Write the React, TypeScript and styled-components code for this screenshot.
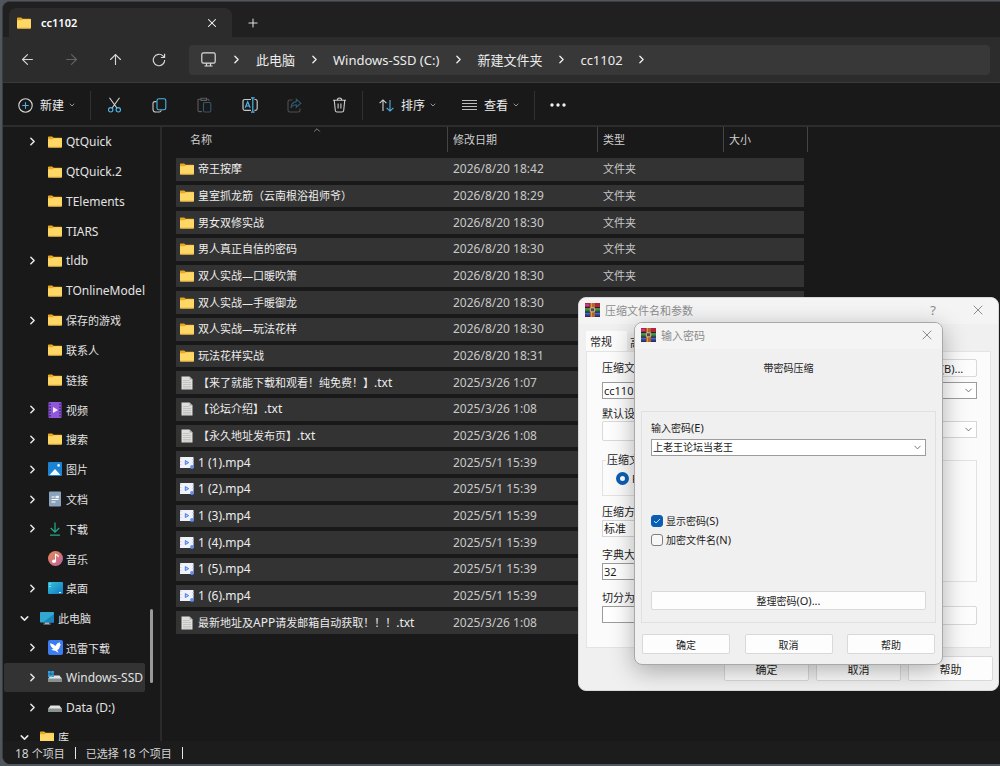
import React from "react";
import styled, { createGlobalStyle, css } from "styled-components";
import { ArrowLeft, ArrowRight, ArrowUp, ChevronDown, ChevronRight, ChevronUp, Plus, X } from "lucide-react";

const Global = createGlobalStyle`
  * { box-sizing: border-box; }
  body {
    margin: 0;
    background: #50565e;
    font-family: "Noto Sans", "Noto Sans CJK SC", sans-serif;
    font-size: 11px;
    color: #dedede;
  }
  button, input, select { font: inherit; color: inherit; margin: 0; }
  button { border: 0; background: none; padding: 0; }
  svg { display: block; flex: none; }
`;

/* ---------- text ---------- */

const Latin = styled.span`
  font-size: 12px;
`;

const DialogLatin = styled.span`
  font-size: 11px;
`;

function Mixed({ text, small }: { text: string; small?: boolean }) {
  const Part = small ? DialogLatin : Latin;
  return (
    <span>
      {text.split(/([\x20-\x7e]+)/).filter(Boolean).map((part, i) =>
        /^[\x20-\x7e]/.test(part) ? <Part key={i}>{part}</Part> : part
      )}
    </span>
  );
}

/* ---------- icons ---------- */

const FolderIcon = () => (
  <svg width="14" height="12" viewBox="0 0 14 12">
    <path d="M0 1.2Q0 .4.8.4h3.4l1.4 1.4h7.6q.8 0 .8.8V6H0z" fill="#e9a820" />
    <path d="M0 3.2h4.6l1.2-.9h8.2v8.4q0 .7-.7.7H.7q-.7 0-.7-.7z" fill="#ffd766" />
    <path d="M0 10.4h14q0 1-.7 1H.7q-.7 0-.7-1z" fill="#eebb45" />
  </svg>
);

const TextFileIcon = () => (
  <svg width="14" height="14" viewBox="0 0 14 14">
    <path d="M1.500.5h8l3 3v10h-11z" fill="#dededc" />
    <path d="M9.500.5v3h3z" fill="#a9a9a9" />
    <path d="M3 4.500h6.500M3 6.500h8M3 8.500h8M3 10.500h8M3 12h8" stroke="#bcbcba" strokeWidth=".8" />
  </svg>
);

const VideoFileIcon = () => (
  <svg width="14" height="12" viewBox="0 0 14 12">
    <rect x="0" y="0" width="13.500" height="11" rx=".6" fill="#f0f2fb" />
    <path d="M0 1h1.400v1H0zM0 4h1.400v1H0zM0 7h1.400v1H0zM12 2h1.500v1H12zM12 5h1.500v1H12z" fill="#c9d0ea" />
    <path d="M5.300 3.600v4l3.400-2z" fill="#b9ceff" stroke="#4a7be8" strokeWidth="1" />
    <circle cx="12" cy="10" r="1.900" fill="#5c8df0" />
  </svg>
);

const FilmIcon = () => (
  <svg width="14" height="16" viewBox="0 0 14 16">
    <rect x=".5" y="0" width="13" height="16" rx="1" fill="#9157db" />
    <path d="M2 1.500v13M12 1.500v13" stroke="#3f2378" strokeWidth="1.400" strokeDasharray="1.6 1.3" />
    <path d="M5 5v6l5-3z" fill="#f3eaff" />
  </svg>
);

const PictureIcon = () => (
  <svg width="14" height="14" viewBox="0 0 14 14">
    <rect width="14" height="14" rx="1" fill="#1c82d4" />
    <path d="M1.500 13l5.500-6 5.500 6z" fill="#f2faff" />
    <circle cx="10.600" cy="3.400" r="1.300" fill="#e9f6ff" />
  </svg>
);

const DocumentIcon = () => (
  <svg width="14" height="16" viewBox="0 0 14 16">
    <rect x="1" y=".5" width="12" height="15" rx="1" fill="#8aa2ba" />
    <path d="M3.500 6h3M3.500 8.500h7M3.500 11h4" stroke="#fff" strokeWidth="1.100" />
    <rect x="7.500" y="4.800" width="3.400" height="2.400" fill="#e9f1f8" />
  </svg>
);

const DownloadIcon = () => (
  <svg width="14" height="14" viewBox="0 0 14 14" fill="none" stroke="#27a587" strokeWidth="1.300">
    <path d="M7 .5v9.500M2.800 6L7 10.200 11.200 6M2 13.200h10" />
  </svg>
);

const MusicIcon = () => (
  <svg width="15" height="15" viewBox="0 0 15 15">
    <defs>
      <linearGradient id="music" x1="0" y1="0" x2="1" y2="1">
        <stop offset="0" stopColor="#ee8a50" />
        <stop offset="1" stopColor="#b9609f" />
      </linearGradient>
    </defs>
    <circle cx="7.500" cy="7.500" r="7.500" fill="url(#music)" />
    <ellipse cx="6" cy="10.300" rx="2" ry="1.700" fill="#fff" />
    <path d="M7.500 10.200V3.400l2.600 1.200v1.600" fill="none" stroke="#fff" strokeWidth="1.100" />
  </svg>
);

const DesktopIcon = () => (
  <svg width="15" height="12" viewBox="0 0 15 12">
    <defs>
      <linearGradient id="desk" x1="0" y1="0" x2="1" y2="1">
        <stop offset="0" stopColor="#32c5d8" />
        <stop offset="1" stopColor="#1576c4" />
      </linearGradient>
    </defs>
    <rect width="15" height="12" rx="1" fill="url(#desk)" />
    <path d="M1.500 2h1.200M1.500 4.500h1.200M11 10.500h2" stroke="#d9f7ff" strokeWidth="1" />
  </svg>
);

const ComputerIcon = () => (
  <svg width="14" height="13" viewBox="0 0 14 13">
    <rect width="14" height="10.500" rx=".8" fill="#31a8cf" />
    <path d="M14 2v8.500H3z" fill="#1e84bd" />
    <path d="M5 10.500h4v1H5zM3.500 11.500h7v1h-7z" fill="#9fb4c1" />
  </svg>
);

const ThunderIcon = () => (
  <svg width="15" height="15" viewBox="0 0 15 15">
    <rect width="15" height="15" rx="2" fill="#3c7df2" />
    <path d="M2 3.200c2.300.4 4 1.300 5.400 2.800 1.300-2.400 2.600-3.500 4.800-3.800-.5.7-.5 1.200-.2 1.900l1.300.8-1.300.5c-.1 2.300-1.200 3.900-2.900 4.600L10.700 13 7.300 10.800c-1.800.1-3.300-.6-4.100-1.700 1 .1 1.600 0 2.200-.3C3.500 7.600 2.300 5.700 2 3.200z" fill="#fff" />
  </svg>
);

const DriveIcon = ({ system }: { system?: boolean }) => (
  <svg width="14" height="13" viewBox="0 0 14 13">
    <path d="M2.500 4.500h9L14 8H0z" fill="#e3e3e3" />
    <rect y="7.500" width="14" height="3.500" rx=".6" fill="#8c8f91" />
    <circle cx="2.500" cy="9.300" r=".8" fill="#41c34a" />
    {system && <path d="M0 0h2.700v2.700H0zM3.200 0h2.700v2.700H3.200zM0 3.200h2.700v2.700H0zM3.200 3.200h2.700v2.700H3.200z" fill="#28a4e8" />}
  </svg>
);

const MonitorIcon = () => (
  <svg width="15" height="15" viewBox="0 0 15 15" fill="none" stroke="#dcdcdc" strokeWidth="1.200">
    <rect x=".8" y=".8" width="13.400" height="10.400" rx="1.600" />
    <path d="M5.500 11.200v2.600M9.500 11.200v2.600M3.500 14h8" />
  </svg>
);

const RefreshIcon = () => (
  <svg width="14" height="14" viewBox="0 0 13 13" fill="none" stroke="#d6d6d6" strokeWidth="1.100">
    <path d="M11.800 6.500A5.300 5.300 0 1 1 10.200 2.700L11.500 4M11.700.8V4.200H8.300" />
  </svg>
);

const blue = "#4cb5e8";

const NewIcon = () => (
  <svg width="15" height="15" viewBox="0 0 15 15" fill="none" strokeWidth="1.100">
    <circle cx="7.500" cy="7.500" r="6.700" stroke="#d8d8d8" />
    <path d="M7.500 4.300v6.400M4.300 7.500h6.400" stroke={blue} />
  </svg>
);

const CutIcon = () => (
  <svg width="15" height="16" viewBox="0 0 15 16" fill="none" strokeWidth="1.100">
    <path d="M2.500.8L9.900 11M12.500.8L5.100 11" stroke="#d8d8d8" />
    <circle cx="3.700" cy="12.800" r="2.200" stroke={blue} />
    <circle cx="11.300" cy="12.800" r="2.200" stroke={blue} />
  </svg>
);

const CopyIcon = () => (
  <svg width="15" height="15" viewBox="0 0 15 15" fill="none" strokeWidth="1.100">
    <path d="M4.500 3.600H3Q1 3.600 1 5.600v5.600q0 2.800 2.800 2.800h3.400q1.800 0 2-1.700" stroke="#c6c6c6" />
    <rect x="5" y=".8" width="8.800" height="11" rx="1.800" stroke={blue} />
  </svg>
);

const PasteIcon = () => (
  <svg width="15" height="16" viewBox="0 0 15 16" fill="none" strokeWidth="1.100">
    <path d="M4 2.200H2.200q-1.200 0-1.200 1.200v10q0 1.200 1.200 1.200H5M9.500 2.200h1.300q1.200 0 1.200 1.200V4M4 1.200h5.500v2.200H4z" stroke="#5a5a5a" />
    <rect x="6.500" y="5.500" width="7.300" height="9.500" rx="1.200" stroke="#2d5a70" />
  </svg>
);

const RenameIcon = () => (
  <svg width="16" height="16" viewBox="0 0 16 16" fill="none" strokeWidth="1.200">
    <path d="M9 2.500H2.800Q1 2.500 1 4.300v7.200q0 1.800 1.800 1.800H9M12.500 2.500h.9q1.800 0 1.800 1.800v7.200q0 1.800-1.800 1.800h-.9" stroke="#c6c6c6" />
    <path d="M10.800 1v14M9 .8h3.600M9 15.200h3.600M3.200 10.800L5.700 4.800l2.500 6M4 9h3.400" stroke={blue} />
  </svg>
);

const ShareIcon = () => (
  <svg width="15" height="15" viewBox="0 0 15 15" fill="none" strokeWidth="1.100">
    <path d="M5.500 2H2.800Q1 2 1 3.800v8.400Q1 14 2.800 14h8.400q1.800 0 1.800-1.800v-1.700" stroke="#4f4f4f" />
    <path d="M9.300 1.200l4.500 4-4.500 4V6.800Q5.500 6.800 4 10q0-5.500 5.300-6.400z" stroke="#2d5a70" />
  </svg>
);

const TrashIcon = () => (
  <svg width="15" height="16" viewBox="0 0 15 16" fill="none" stroke="#d0d0d0" strokeWidth="1.100">
    <path d="M1 3.300h13M5.300 3.200Q5.300 1 7.500 1t2.200 2.200M2.300 3.500l1 10q.2 1.500 1.700 1.500h5q1.500 0 1.700-1.500l1-10M6.100 6.500v5M8.900 6.500v5" />
  </svg>
);

const SortIcon = () => (
  <svg width="15" height="13" viewBox="0 0 15 13" fill="none" strokeWidth="1.100">
    <path d="M4 12V1M.6 4.200L4 .9l3.400 3.300" stroke="#d0d0d0" />
    <path d="M11 1v11M7.600 8.800l3.400 3.300 3.400-3.300" stroke={blue} />
  </svg>
);

const LinesIcon = () => (
  <svg width="15" height="12" viewBox="0 0 15 12" stroke="#bdbdbd">
    <path d="M0 1.500h15M0 4.500h15M0 7.500h15M0 10.500h15" />
  </svg>
);

const DotsIcon = () => (
  <svg width="16" height="4" viewBox="0 0 16 4" fill="#f0f0f0">
    <circle cx="2" cy="2" r="1.700" />
    <circle cx="8" cy="2" r="1.700" />
    <circle cx="14" cy="2" r="1.700" />
  </svg>
);

const ArchiveIcon = () => (
  <svg width="15" height="14" viewBox="0 0 15 14">
    <rect width="15" height="4.500" fill="#b0243f" />
    <rect y="1" width="4" height="2" fill="#c33a8c" />
    <rect y="4.700" width="15" height="4.300" fill="#2f7a3b" />
    <rect y="5.500" width="15" height="1" fill="#5ba851" />
    <rect y="9.200" width="15" height="4.500" fill="#2b3f94" />
    <rect y="10.200" width="15" height="1" fill="#5a76cc" />
    <path d="M0 4.500h15M0 9.100h15M0 13.700h15" stroke="#1f1428" strokeWidth=".9" />
    <rect x="5" width="5" height="14" fill="#b5642a" />
    <path d="M6.500 0v14" stroke="#e0a04a" strokeWidth=".9" />
    <rect x="5.300" y="4.800" width="4.400" height="4" rx=".6" fill="#54484a" stroke="#d9c8a0" strokeWidth=".9" />
  </svg>
);

/* ---------- explorer window ---------- */

const Screen = styled.div`
  position: relative;
  height: 100vh;
  min-height: 766px;
  padding: 1px 0 2px 2px;
  overflow: hidden;
`;

const Explorer = styled.main`
  display: flex;
  flex-direction: column;
  height: 100%;
  border: solid #3c3c3c;
  border-width: 1px 0 0 1px;
  border-radius: 8px 0 0 8px;
  background: #191919;
  overflow: hidden;
`;

const TitleBar = styled.header`
  display: flex;
  align-items: flex-end;
  height: 35px;
  padding-left: 6px;
  background: #202020;
`;

const Tab = styled.div`
  display: flex;
  align-items: center;
  width: 223px;
  height: 29px;
  padding: 0 13px 0 8px;
  gap: 10px;
  border-radius: 7px 7px 0 0;
  background: #2c2c2c;
  font-size: 11px;
  font-weight: 600;
  color: #fff;
`;

const TabLabel = styled.span`
  flex: 1;
`;

const NewTab = styled.button`
  display: flex;
  align-items: center;
  justify-content: center;
  width: 42px;
  height: 29px;
`;

const NavBar = styled.div`
  display: flex;
  align-items: center;
  height: 46px;
  padding: 0 10px 0 2px;
  background: #2c2c2c;
  border-bottom: 1px solid #3a3a3a;
`;

const NavButton = styled.button`
  display: flex;
  align-items: center;
  justify-content: center;
  width: 44px;
  height: 30px;
  color: #d6d6d6;
  &:disabled { color: #636363; }
`;

const Address = styled.nav`
  flex: 1;
  display: flex;
  align-items: center;
  height: 30px;
  margin-left: 8px;
  padding-left: 12px;
  border-radius: 4px;
  background: #383838;
`;

const Crumb = styled.button`
  font-size: 13px;
  line-height: 18px;
  color: #ececec;
  white-space: nowrap;
`;

const CrumbArrow = styled.span<{ $first?: boolean }>`
  display: flex;
  justify-content: center;
  width: ${(p) => (p.$first ? 40 : 38)}px;
  color: #f0f0f0;
`;

const Toolbar = styled.div`
  display: flex;
  align-items: center;
  height: 44px;
  padding: 2px 0 0 15px;
  border-bottom: 2px solid #2d2d2d;
`;

const ToolButton = styled.button<{ $end: number }>`
  display: flex;
  align-items: center;
  height: 30px;
  margin-right: ${(p) => p.$end}px;
  gap: 7px;
  font-size: 12px;
  color: #ececec;
  white-space: nowrap;
`;

const ToolLabel = styled.span`
  display: flex;
  align-items: center;
  gap: 4px;
  svg { color: #a8a8a8; }
`;

const IconButton = styled.button`
  display: flex;
  align-items: center;
  justify-content: center;
  width: 45px;
  height: 30px;
`;

const ToolDivider = styled.span<{ $after?: number }>`
  width: 1px;
  height: 29px;
  margin-right: ${(p) => p.$after ?? 0}px;
  background: #303030;
`;

const Content = styled.div`
  flex: 1;
  min-height: 0;
  display: flex;
`;

const Sidebar = styled.aside`
  position: relative;
  flex: none;
  width: 159px;
  border-right: 2px solid #2a2a2a;
  overflow: hidden;
`;

const Tree = styled.ul`
  display: grid;
  grid-template-rows: repeat(21, 1fr);
  height: 625px;
  margin: 0;
  padding: 0 17px 0 1px;
  list-style: none;
`;

const TreeRow = styled.button<{ $root?: boolean; $active?: boolean }>`
  display: flex;
  align-items: center;
  width: 100%;
  height: 100%;
  padding-left: ${(p) => (p.$root ? 14 : 22)}px;
  overflow: hidden;
  white-space: nowrap;
  border-radius: 2px;
  color: #e2e2e2;
  background: ${(p) => (p.$active ? "#333" : "none")};
`;

const TreeArrow = styled.span`
  display: flex;
  flex: none;
  width: 22px;
  color: #e8e8e8;
`;

const IconSlot = styled.span`
  display: flex;
  justify-content: center;
  flex: none;
  width: 14px;
  margin-right: 4px;
`;

const ScrollThumb = styled.div`
  position: absolute;
  right: 7px;
  bottom: 58px;
  width: 3px;
  height: 74px;
  border-radius: 2px;
  background: #9a9a9a;
`;

const Pane = styled.section`
  flex: 1;
  padding-left: 14px;
`;

const columns = css`
  display: grid;
  grid-template-columns: 272px 150px 126px 1fr;
`;

const FileTable = styled.table`
  display: block;
  width: 632px;
  line-height: 20px;
`;

const FileHead = styled.thead`
  display: block;
  padding-bottom: 4px;
`;

const HeadRow = styled.tr`
  ${columns}
`;

const HeadCell = styled.th<{ $first?: boolean }>`
  position: relative;
  height: 25px;
  padding: 0 0 0 ${(p) => (p.$first ? 14 : 5)}px;
  border-right: 1px solid #454545;
  line-height: 25px;
  font-weight: 400;
  text-align: left;
  color: #cfcfcf;
`;

const SortMark = styled.span`
  position: absolute;
  top: -2px;
  left: 50%;
  color: #9a9a9a;
`;

const FileBody = styled.tbody`
  display: grid;
  grid-template-rows: repeat(18, 1fr);
  height: 480px;
  margin-right: 4px;
`;

const FileRow = styled.tr`
  ${columns}
  align-items: center;
  border: solid transparent;
  border-width: 2px 0;
  background: #333;
  background-clip: padding-box;
`;

const NameCell = styled.td`
  display: flex;
  align-items: center;
  padding: 0 0 0 4px;
  white-space: nowrap;
  color: #ececec;
`;

const Cell = styled.td`
  padding: 0 0 0 5px;
  white-space: nowrap;
  color: #c8c8c8;
`;

const StatusBar = styled.footer`
  display: flex;
  align-items: center;
  height: 23px;
  padding: 1px 0 0 12px;
  gap: 10px;
  background: #1c1c1c;
  color: #d4d4d4;
`;

const StatusDivider = styled.span`
  width: 1px;
  height: 12px;
  background: #e6e6e6;
`;

/* ---------- dialogs ---------- */

const Dialog = styled.section`
  position: absolute;
  display: flex;
  flex-direction: column;
  border-radius: 8px;
  background: #f0f0f0;
  color: #1c1c1c;
  overflow: hidden;
`;

const ArchiveDialog = styled(Dialog)`
  top: 297px;
  right: 1px;
  width: 421px;
  height: 394px;
  border: 1px solid #d8d8d8;
  font-size: 11px;
`;

const PasswordDialog = styled(Dialog)`
  top: 322px;
  right: 57px;
  width: 309px;
  height: 343px;
  border: 1px solid #a8a8a8;
  box-shadow: 0 6px 24px rgba(0, 0, 0, 0.3);
  font-size: 10px;
`;

const DialogTitle = styled.header`
  display: flex;
  align-items: center;
  height: 26px;
  padding: 0 0 2px 6px;
  gap: 5px;
  background: #f4f4f4;
  color: #8c8c8c;
`;

const DialogHeading = styled.h2`
  flex: 1;
  margin: 0;
  font-size: 11px;
  font-weight: 400;
`;

const TitleButton = styled.button<{ $width: number }>`
  display: flex;
  align-items: center;
  justify-content: center;
  width: ${(p) => p.$width}px;
  height: 24px;
  font-size: 13px;
`;

const TabStrip = styled.div`
  display: flex;
  align-items: flex-end;
  padding: 7px 7px 0;
`;

const DialogTab = styled.button<{ $active?: boolean }>`
  height: ${(p) => (p.$active ? 20 : 18)}px;
  padding: 0 ${(p) => (p.$active ? 15 : 3)}px 0 ${(p) => (p.$active ? 4 : 3)}px;
  background: ${(p) => (p.$active ? "#fbfbfb" : "#ececec")};
`;

const TabPage = styled.div`
  display: flex;
  flex-direction: column;
  height: 297px;
  margin: 0 7px;
  padding: 7px 13px 0 15px;
  border: 1px solid #e4e4e4;
  background: #fbfbfb;
`;

const Between = styled.div`
  display: flex;
  align-items: center;
  justify-content: space-between;
  margin-bottom: 5px;
`;

const Columns = styled.div`
  display: grid;
  grid-template-columns: 160px 1fr;
  gap: 12px;
`;

const Stack = styled.div<{ $top?: number }>`
  display: flex;
  flex-direction: column;
  padding-top: ${(p) => p.$top ?? 0}px;
`;

const Field = styled.div<{ $top: number }>`
  display: flex;
  flex-direction: column;
  gap: 1px;
  margin-top: ${(p) => p.$top}px;
`;

const FieldLabel = styled.label`
  line-height: 14px;
  white-space: nowrap;
`;

const SelectBox = styled.span`
  position: relative;
  display: block;
`;

const Picker = styled.select<{ $soft?: boolean }>`
  appearance: none;
  display: block;
  width: 100%;
  height: 17px;
  padding: 0 20px 0 1px;
  border: 1px solid ${(p) => (p.$soft ? "#d6d6d6" : "#9c9c9c")};
  border-radius: 0;
  background: #fff;
  line-height: 15px;
`;

const PickerArrow = styled.span`
  position: absolute;
  top: 3px;
  right: 3px;
  color: #6b6b6b;
  pointer-events: none;
`;

const PushButton = styled.button<{ $width?: number; $height: number }>`
  width: ${(p) => (p.$width ? `${p.$width}px` : "100%")};
  height: ${(p) => p.$height}px;
  border: 1px solid #d9d9d9;
  border-radius: 2px;
  background: #fdfdfd;
  white-space: nowrap;
`;

const Group = styled.fieldset<{ $height: number }>`
  height: ${(p) => p.$height}px;
  min-width: 0;
  margin: 0;
  padding: 4px 13px;
  border: 1px solid #e2e2e2;
`;

const Legend = styled.legend`
  margin-left: -10px;
  padding: 0 1px;
  line-height: 14px;
`;

const Option = styled.label`
  display: flex;
  align-items: center;
  gap: 3px;
  white-space: nowrap;
`;

const Radio = styled.input`
  appearance: none;
  width: 13px;
  height: 13px;
  border: 4px solid #0a5fb4;
  border-radius: 50%;
  background: #fff;
`;

const Tick = styled.input`
  appearance: none;
  width: 12px;
  height: 12px;
  border: 1px solid #7e7e7e;
  border-radius: 3px;
  background: #f7f7f7;
  &:checked {
    border-color: #0a5fb4;
    background: #0a5fb4;
  }
`;

const TickBox = styled.span`
  position: relative;
  display: flex;
`;

const TickMark = styled.span`
  position: absolute;
  top: 3px;
  left: 2px;
  pointer-events: none;
`;

const ArchiveFooter = styled.footer`
  display: flex;
  justify-content: flex-end;
  gap: 7px;
  padding: 8px 5px 0;
`;

const Caption = styled.p`
  margin: 11px 0 35px;
  line-height: 16px;
  text-align: center;
`;

const PasswordPanel = styled.div`
  display: flex;
  flex-direction: column;
  height: 212px;
  margin: 0 6px;
  padding: 9px 9px 0 9px;
  border: 1px solid #e0e0e0;
`;

const Ticks = styled.div`
  display: flex;
  flex-direction: column;
  gap: 5px;
  margin: 58px 0 44px;
  line-height: 14px;
`;

const PasswordFooter = styled.footer`
  display: flex;
  justify-content: space-between;
  padding: 11px 7px 0;
`;

/* ---------- data ---------- */

type Node = { label: string; icon: React.ReactNode; arrow?: "right" | "down"; root?: boolean; active?: boolean };

const tree: Node[] = [
  { label: "QtQuick", icon: <FolderIcon />, arrow: "right" },
  { label: "QtQuick.2", icon: <FolderIcon /> },
  { label: "TElements", icon: <FolderIcon /> },
  { label: "TIARS", icon: <FolderIcon /> },
  { label: "tldb", icon: <FolderIcon />, arrow: "right" },
  { label: "TOnlineModel", icon: <FolderIcon /> },
  { label: "保存的游戏", icon: <FolderIcon />, arrow: "right" },
  { label: "联系人", icon: <FolderIcon /> },
  { label: "链接", icon: <FolderIcon /> },
  { label: "视频", icon: <FilmIcon />, arrow: "right" },
  { label: "搜索", icon: <FolderIcon />, arrow: "right" },
  { label: "图片", icon: <PictureIcon />, arrow: "right" },
  { label: "文档", icon: <DocumentIcon />, arrow: "right" },
  { label: "下载", icon: <DownloadIcon />, arrow: "right" },
  { label: "音乐", icon: <MusicIcon /> },
  { label: "桌面", icon: <DesktopIcon />, arrow: "right" },
  { label: "此电脑", icon: <ComputerIcon />, arrow: "down", root: true },
  { label: "迅雷下载", icon: <ThunderIcon />, arrow: "right" },
  { label: "Windows-SSD", icon: <DriveIcon system />, arrow: "right", active: true },
  { label: "Data (D:)", icon: <DriveIcon />, arrow: "right" },
  { label: "库", icon: <FolderIcon />, arrow: "down", root: true },
];

type Kind = "folder" | "text" | "video";

const files: [string, string, Kind][] = [
  ["帝王按摩", "2026/8/20 18:42", "folder"],
  ["皇室抓龙筋（云南根浴祖师爷）", "2026/8/20 18:29", "folder"],
  ["男女双修实战", "2026/8/20 18:30", "folder"],
  ["男人真正自信的密码", "2026/8/20 18:30", "folder"],
  ["双人实战—口暖吹箫", "2026/8/20 18:30", "folder"],
  ["双人实战—手暖御龙", "2026/8/20 18:30", "folder"],
  ["双人实战—玩法花样", "2026/8/20 18:30", "folder"],
  ["玩法花样实战", "2026/8/20 18:31", "folder"],
  ["【来了就能下载和观看！纯免费！】.txt", "2025/3/26 1:07", "text"],
  ["【论坛介绍】.txt", "2025/3/26 1:08", "text"],
  ["【永久地址发布页】.txt", "2025/3/26 1:08", "text"],
  ["1 (1).mp4", "2025/5/1 15:39", "video"],
  ["1 (2).mp4", "2025/5/1 15:39", "video"],
  ["1 (3).mp4", "2025/5/1 15:39", "video"],
  ["1 (4).mp4", "2025/5/1 15:39", "video"],
  ["1 (5).mp4", "2025/5/1 15:39", "video"],
  ["1 (6).mp4", "2025/5/1 15:39", "video"],
  ["最新地址及APP请发邮箱自动获取！！！.txt", "2025/3/26 1:08", "text"],
];

const fileIcons: Record<Kind, React.ReactNode> = {
  folder: <FolderIcon />,
  text: <TextFileIcon />,
  video: <VideoFileIcon />,
};

const fileTypes: Record<Kind, string> = { folder: "文件夹", text: "", video: "" };

/* rows from this one on have their type column under the dialog */
const coveredFrom = 5;

const crumbs = ["此电脑", "Windows-SSD (C:)", "新建文件夹", "cc1102"];

/* ---------- parts ---------- */

function Select({ id, value, soft, label }: { id?: string; value?: string; soft?: boolean; label?: string }) {
  return (
    <SelectBox>
      <Picker id={id} $soft={soft} aria-label={label}>
        <option>{value}</option>
      </Picker>
      <PickerArrow>
        <ChevronDown size={11} strokeWidth={2} />
      </PickerArrow>
    </SelectBox>
  );
}

function ArchiveWindow() {
  return (
    <ArchiveDialog role="dialog" aria-labelledby="archive-title">
      <DialogTitle>
        <ArchiveIcon />
        <DialogHeading id="archive-title">压缩文件名和参数</DialogHeading>
        <TitleButton $width={38} aria-label="帮助主题">?</TitleButton>
        <TitleButton $width={41} aria-label="关闭">
          <X size={16} strokeWidth={1.5} />
        </TitleButton>
      </DialogTitle>
      <TabStrip>
        <DialogTab $active>常规</DialogTab>
        <DialogTab>高级</DialogTab>
      </TabStrip>
      <TabPage>
        <Between>
          <FieldLabel htmlFor="archive-name">压缩文件名</FieldLabel>
          <PushButton $width={72} $height={18}>
            <Mixed small text="浏览(B)..." />
          </PushButton>
        </Between>
        <Select id="archive-name" value="cc1102.rar" />
        <Columns>
          <Stack $top={8}>
            <FieldLabel as="span">默认设置</FieldLabel>
            <PushButton $height={20} aria-label="配置" />
          </Stack>
          <Stack $top={22}>
            <Select soft label="更新方式" />
          </Stack>
        </Columns>
        <Columns>
          <Stack $top={12}>
            <Group $height={43}>
              <Legend>压缩文件格式</Legend>
              <Option>
                <Radio type="radio" name="format" defaultChecked />
                RAR
              </Option>
            </Group>
            <Field $top={9}>
              <FieldLabel htmlFor="method">压缩方式</FieldLabel>
              <Select id="method" value="标准" soft />
            </Field>
            <Field $top={11}>
              <FieldLabel htmlFor="dictionary">字典大小</FieldLabel>
              <Select id="dictionary" value="32" />
            </Field>
            <Field $top={11}>
              <FieldLabel htmlFor="volumes">切分为分卷</FieldLabel>
              <Select id="volumes" />
            </Field>
          </Stack>
          <Stack $top={19}>
            <Group $height={122} />
            <Field $top={24}>
              <PushButton $height={19} aria-label="设置密码" />
            </Field>
          </Stack>
        </Columns>
      </TabPage>
      <ArchiveFooter>
        <PushButton $width={85} $height={25}>确定</PushButton>
        <PushButton $width={85} $height={25}>取消</PushButton>
        <PushButton $width={85} $height={25}>帮助</PushButton>
      </ArchiveFooter>
    </ArchiveDialog>
  );
}

function PasswordWindow() {
  return (
    <PasswordDialog role="dialog" aria-labelledby="password-title">
      <DialogTitle>
        <ArchiveIcon />
        <DialogHeading id="password-title">输入密码</DialogHeading>
        <TitleButton $width={30} aria-label="关闭">
          <X size={16} strokeWidth={1.5} />
        </TitleButton>
      </DialogTitle>
      <Caption>带密码压缩</Caption>
      <PasswordPanel>
        <FieldLabel htmlFor="password">
          <Mixed small text="输入密码(E)" />
        </FieldLabel>
        <Field $top={4}>
          <Select id="password" value="上老王论坛当老王" />
        </Field>
        <Ticks>
          <Option>
            <TickBox>
              <Tick type="checkbox" defaultChecked />
              <TickMark>
                <svg width="8" height="6" viewBox="0 0 8 6" fill="none" stroke="#bfe0ff">
                  <path d="M1 3l2 2 4-4" />
                </svg>
              </TickMark>
            </TickBox>
            <Mixed small text="显示密码(S)" />
          </Option>
          <Option>
            <Tick type="checkbox" />
            <Mixed small text="加密文件名(N)" />
          </Option>
        </Ticks>
        <PushButton $height={19}>
          <Mixed small text="整理密码(O)..." />
        </PushButton>
      </PasswordPanel>
      <PasswordFooter>
        <PushButton $width={88} $height={20}>确定</PushButton>
        <PushButton $width={88} $height={20}>取消</PushButton>
        <PushButton $width={88} $height={20}>帮助</PushButton>
      </PasswordFooter>
    </PasswordDialog>
  );
}

export default function App() {
  return (
    <Screen>
      <Global />
      <Explorer>
        <TitleBar>
          <Tab>
            <FolderIcon />
            <TabLabel>cc1102</TabLabel>
            <button aria-label="关闭标签页">
              <X size={14} strokeWidth={1.8} />
            </button>
          </Tab>
          <NewTab aria-label="新标签页">
            <Plus size={14} strokeWidth={1.8} />
          </NewTab>
        </TitleBar>
        <NavBar>
          <NavButton aria-label="后退">
            <ArrowLeft size={17} strokeWidth={1.6} />
          </NavButton>
          <NavButton aria-label="前进" disabled>
            <ArrowRight size={17} strokeWidth={1.6} />
          </NavButton>
          <NavButton aria-label="向上">
            <ArrowUp size={17} strokeWidth={1.6} />
          </NavButton>
          <NavButton aria-label="刷新">
            <RefreshIcon />
          </NavButton>
          <Address aria-label="地址">
            <MonitorIcon />
            <CrumbArrow $first>
              <ChevronRight size={13} strokeWidth={2.4} />
            </CrumbArrow>
            {crumbs.map((name) => (
              <React.Fragment key={name}>
                <Crumb>{name}</Crumb>
                <CrumbArrow>
                  <ChevronRight size={13} strokeWidth={2.4} />
                </CrumbArrow>
              </React.Fragment>
            ))}
          </Address>
        </NavBar>
        <Toolbar>
          <ToolButton $end={14}>
            <NewIcon />
            <ToolLabel>
              新建
              <ChevronDown size={8} strokeWidth={2.6} />
            </ToolLabel>
          </ToolButton>
          <ToolDivider $after={1} />
          <IconButton aria-label="剪切"><CutIcon /></IconButton>
          <IconButton aria-label="复制"><CopyIcon /></IconButton>
          <IconButton aria-label="粘贴" disabled><PasteIcon /></IconButton>
          <IconButton aria-label="重命名"><RenameIcon /></IconButton>
          <IconButton aria-label="共享" disabled><ShareIcon /></IconButton>
          <IconButton aria-label="删除"><TrashIcon /></IconButton>
          <ToolDivider $after={16} />
          <ToolButton $end={25}>
            <SortIcon />
            <ToolLabel>
              排序
              <ChevronDown size={8} strokeWidth={2.6} />
            </ToolLabel>
          </ToolButton>
          <ToolButton $end={14}>
            <LinesIcon />
            <ToolLabel>
              查看
              <ChevronDown size={8} strokeWidth={2.6} />
            </ToolLabel>
          </ToolButton>
          <ToolDivider />
          <IconButton aria-label="更多"><DotsIcon /></IconButton>
        </Toolbar>
        <Content>
          <Sidebar>
            <Tree>
              {tree.map((n) => (
                <li key={n.label}>
                  <TreeRow $root={n.root} $active={n.active}>
                    <TreeArrow>
                      {n.arrow === "right" && <ChevronRight size={13} strokeWidth={2.8} />}
                      {n.arrow === "down" && <ChevronDown size={13} strokeWidth={2.8} />}
                    </TreeArrow>
                    <IconSlot>{n.icon}</IconSlot>
                    <Mixed text={n.label} />
                  </TreeRow>
                </li>
              ))}
            </Tree>
            <ScrollThumb />
          </Sidebar>
          <Pane>
            <FileTable>
              <FileHead>
                <HeadRow>
                  <HeadCell $first>
                    名称
                    <SortMark>
                      <ChevronUp size={10} strokeWidth={2} />
                    </SortMark>
                  </HeadCell>
                  <HeadCell>修改日期</HeadCell>
                  <HeadCell>类型</HeadCell>
                  <HeadCell>大小</HeadCell>
                </HeadRow>
              </FileHead>
              <FileBody>
                {files.map(([name, date, kind], i) => (
                  <FileRow key={name}>
                    <NameCell>
                      <IconSlot>{fileIcons[kind]}</IconSlot>
                      <Mixed text={name} />
                    </NameCell>
                    <Cell>
                      <Mixed text={date} />
                    </Cell>
                    <Cell>{i < coveredFrom ? fileTypes[kind] : ""}</Cell>
                    <Cell />
                  </FileRow>
                ))}
              </FileBody>
            </FileTable>
          </Pane>
        </Content>
        <StatusBar>
          <Mixed text="18 个项目" />
          <StatusDivider />
          <Mixed text="已选择 18 个项目" />
          <StatusDivider />
        </StatusBar>
      </Explorer>
      <ArchiveWindow />
      <PasswordWindow />
    </Screen>
  );
}
